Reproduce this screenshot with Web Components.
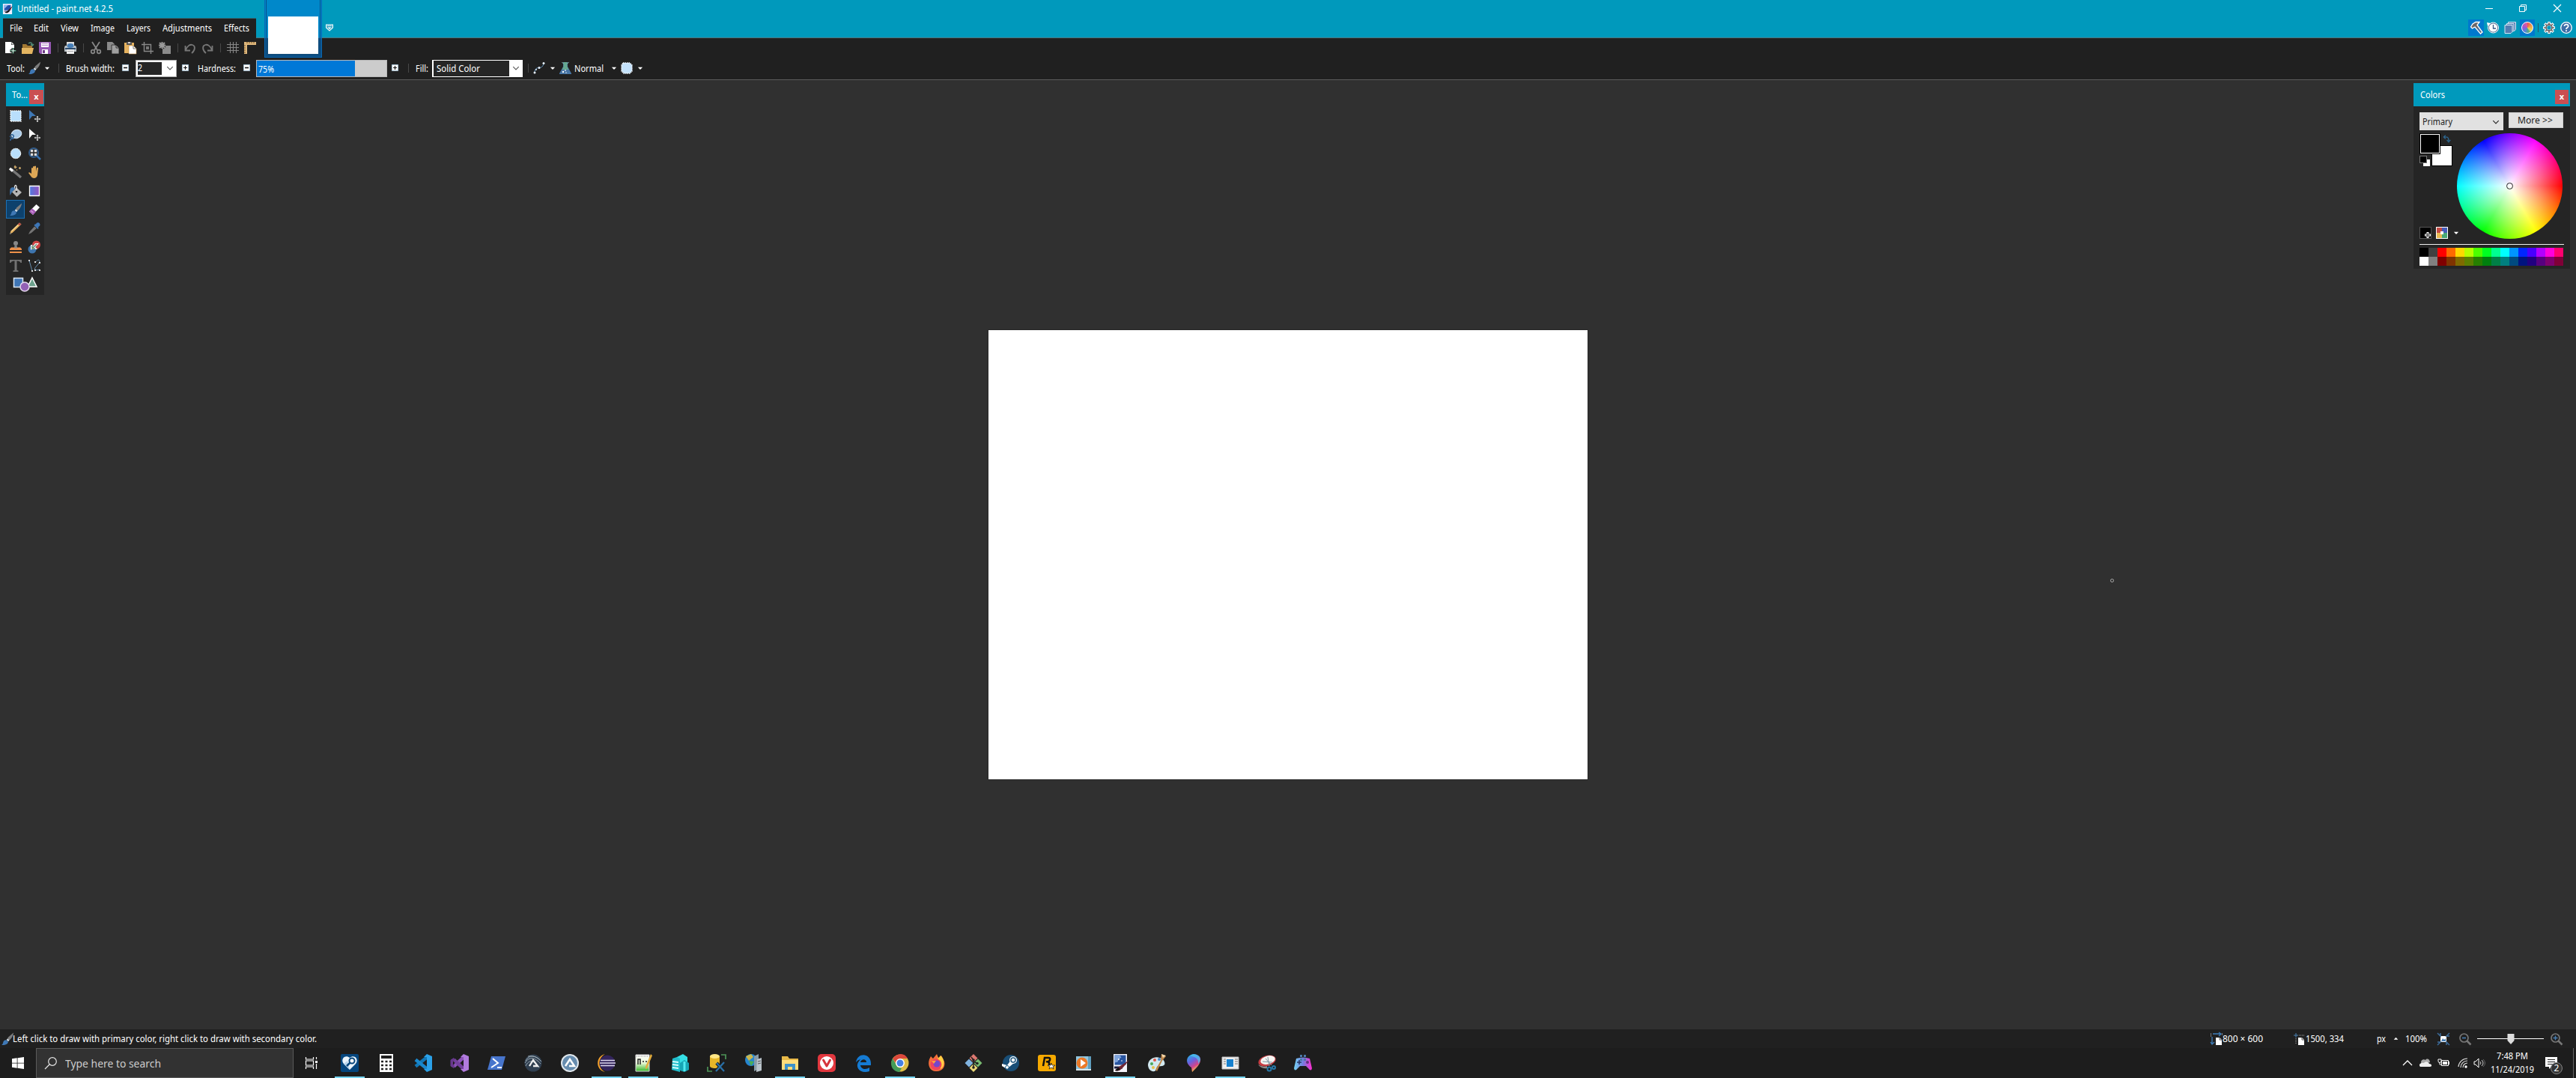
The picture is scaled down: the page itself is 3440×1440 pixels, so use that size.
<!DOCTYPE html>
<html lang="en"><head><meta charset="utf-8"><title>Untitled - paint.net 4.2.5</title>
<style>html,body{margin:0;height:100%;background:#303030;overflow:hidden}body{font:12px/16px "Noto Sans","Open Sans",sans-serif;color:#fff}</style></head>
<body><paint-desktop></paint-desktop>
<script>
const ICONS = {
 app:'<path d="M1 0h14v16H1z" fill="#eef"/><path d="M3 2h10v8H3z" fill="#2450a8"/><path d="M3 2h6L3 8z" fill="#8fb8ee"/><path d="M3 11h8v1H3z" fill="#224"/><path d="M4 13c3-1 4-2 6-4l6-6-5 8c-2 3-5 4-7 2z" fill="#111"/><path d="M11 9l5-6-4 7z" fill="#a22"/>',
 new:'<path d="M1 0h8l4 4v11H1z" fill="#fff"/><path d="M9 0v4h4z" fill="#202020"/><path d="M9.500 0l3.500 3.500H9.500z" fill="#ddd"/><path d="M11.500 8v8M7.500 12h8" stroke="#202020" stroke-width="4"/><path d="M11.500 8v7.500M7.800 11.800h7.500" stroke="#6cae91" stroke-width="1.600"/><path d="M11.500 9.500v4.500M9.500 11.800h4" stroke="#fff" stroke-width=".6"/>',
 open:'<path d="M1 3h5l2 2h6v4H1z" fill="#a47933"/><path d="M0 8h16l-2 8H0z" fill="#e4b561"/><path d="M9 2c3-2 5-1 5 2m-2-1l2.200 2L16 3" fill="none" stroke="#528c77" stroke-width="1.500"/>',
 save:'<path d="M0 0h16v16H2l-2-2z" fill="#9658b4"/><path d="M3 1h10v6H3zM4 10h8v6H4z" fill="#fff"/><path d="M4 2.500h8M4 4.700h8" stroke="#b68cc8"/><path d="M5 11h3v4H5z" fill="#6f3c8a"/>',
 print:'<path d="M3 0h10v6H3z" fill="#ddd"/><path d="M1 5h14l1 2v6H0V7z" fill="#b9c0c5"/><ellipse cx="8" cy="5" rx="4.500" ry="3" fill="#477fb8"/><path d="M1 8h14v2H1z" fill="#2e4b6c"/><path d="M3 10h10v6H3z" fill="#eee"/><path d="M4 12.500h8" stroke="#aaa"/>',
 cut:'<path d="M3 0l7 11M13 0L6 11" stroke="#888" stroke-width="1.800"/><g fill="none" stroke="#888" stroke-width="1.700"><circle cx="4" cy="13" r="2.300"/><circle cx="12" cy="13" r="2.300"/></g>',
 copy:'<path d="M0 0h7l3 3v8H0z" fill="#8b8b8b"/><path d="M6 4h6l4 4v8H6z" fill="#a0a0a0" stroke="#202020" stroke-width=".8"/><path d="M12 4v4h4" fill="none" stroke="#333"/>',
 paste:'<path d="M0 1h13v14H0z" fill="#e5b25f"/><path d="M3 0h7v4H3z" fill="#555"/><path d="M5 0h3v2H5z" fill="#ccc"/><path d="M6 5h6l4 4v7H6z" fill="#fff" stroke="#c08f48" stroke-width=".6"/><path d="M12 5v4h4" fill="none" stroke="#777"/>',
 crop:'<path d="M3.500 0v12.500H16M0 3.500h12.500V16" fill="none" stroke="#888" stroke-width="1.400"/><path d="M6 6h4v4H6z" fill="#777"/>',
 desel:'<path d="M5 5h11v11H5z" fill="#8b8b8b"/><path d="M1 1l7 7M8 1L1 8" stroke="#202020" stroke-width="4"/><path d="M1 1l7 7M8 1L1 8M4.500 0v9M0 4.500h9" stroke="#999" stroke-width="2"/>',
 undo:'<path d="M1.500 5v6.500H8M2 11C4 5 8 3 11 4c4 1 4 7-1 11" fill="none" stroke="#777" stroke-width="1.800"/>',
 redo:'<path d="M14.500 5v6.500H8M14 11C12 5 8 3 5 4c-4 1-4 7 1 11" fill="none" stroke="#777" stroke-width="1.800"/>',
 grid:'<path d="M4.500 0v15M8.500 0v15M12.500 0v15M0 3.500h16M0 7.500h16M0 11.500h16" stroke="#858585" stroke-width="1.100"/>',
 ruler:'<path d="M0 0h16v4H4v12H0z" fill="#deb77c"/><path d="M4 0v2m3-2v2m3-2v2m3-2v2M0 5h2M0 8h2m-2 3h2m-2 3h2" stroke="#765529"/>',
 brush:'<path d="M16-.5L9 5.500 7.500 8.500 9.500 10C13 8 15.500 4 16-.5z" fill="#7d7d7d"/><path d="M8 7.500l2.500 2L9 11.300 6.700 9z" fill="#d3dfe8"/><path d="M6.300 9.300l2.700 2.400C8.500 15.500 4 16 0 16c1.600-1 1.800-2 2.200-3.500.5-2.300 2-3.300 4.100-3.200z" fill="#3f78b5"/>',
 minus:'<path d="M3 3h10v10H3z" fill="#fff" stroke="#a9c7dc"/><path d="M5 8h6" stroke="#111" stroke-width="2"/>',
 plus:'<path d="M3 3h10v10H3z" fill="#fff" stroke="#a9c7dc"/><path d="M5 8h6M8 5v6" stroke="#111" stroke-width="1.500"/>',
 arrow:'<path d="M3 6h10l-5 5z" fill="#fff"/>', up:'<path d="M3 10h10L8 5z" fill="#fff"/>',
 chev:'<path d="M2 5l6 6 6-6" fill="none" stroke="currentColor" stroke-width="1.700"/>',
 curve:'<path d="M2 13C3 3 12 12 14 2" fill="none" stroke="#5f8eb5"/><g fill="#e8f3ff"><circle cx="2" cy="14" r="1.500"/><circle cx="8" cy="7.500" r="1.500"/><circle cx="14" cy="1.500" r="1.500"/><circle cx="4" cy="10" r="1"/></g>',
 flask:'<path d="M5 0h6v6l5 9v1H0v-1l5-9z" fill="#4775a5"/><path d="M5.500 0h5v6l2 4h-9l2-4z" fill="#65a88f"/><path d="M3.500 0l2 2m7-2l-2 2" stroke="#9cc"/><circle cx="5" cy="13" r="1.200" fill="#fff"/><circle cx="8" cy="11" r="1" fill="#cde"/><circle cx="9" cy="14" r=".7" fill="#fff"/>',
 blob:'<path d="M3 1h9l3 3v8l-3 3H4l-3-3V4z" fill="#c4e2fc" stroke="#f2f8ff" stroke-width="1.500" stroke-dasharray="1.500 1"/>',
 tabs:'<path d="M1 1.500h14v6.500l-7 6.500L1 8z" fill="#3aa6c4" stroke="#fff" stroke-width="1.800"/><path d="M4 4h2m1 0h2m1 0h2" stroke="#fff" stroke-width="1.500"/><path d="M4 7h8l-4 4z" fill="#fff"/>',
 min:'<path d="M3 8.500h10" stroke="#fff"/>', restore:'<path d="M3.500 5.500h7v7h-7zM5.500 5.500v-2h7v7h-2" fill="none" stroke="#fff"/>', close:'<path d="M3 3l10 10M13 3L3 13" stroke="#fff" stroke-width="1.200"/>',
 hammer:'<path d="M.5 7L3 3l4-2.500h5L9 4.500l7 9.500-2.500 2L6 7 2.500 9z" fill="#6d6768" stroke="#fff" stroke-width="1.300"/><path d="M9.500 8.500l4 5" stroke="#4675ae" stroke-width="1.500"/>',
 clock:'<circle cx="8.500" cy="8" r="7" fill="#547195" stroke="#fff"/><circle cx="8.500" cy="8" r="5.600" fill="#fff"/><path d="M8.500 4v5H12" fill="none" stroke="#355782" stroke-width="1.300"/><path d="M0 1l5 1-4 4z" fill="#fff"/>',
 layers:'<g fill="#547eb2" stroke="#d7e7f3"><path d="M5.500.5h10v10l-2 2h-8z"/><path d="M3.500 2.500h9.500v9l-2 2H3.500z"/><path d="M1 4.500h10v9L9 15.500H1z"/></g>',
 gear:'<path d="M8 0v3m0 10v3M0 8h3m10 0h3M2.300 2.300l2.200 2.200m7 7l2.200 2.200M13.700 2.300l-2.200 2.200m-7 7l-2.200 2.200" stroke="#fff" stroke-width="3.600"/><circle cx="8" cy="8" r="4.500" fill="none" stroke="#fff" stroke-width="3.600"/><path d="M8 1v3m0 8v3M1 8h3m8 0h3M3 3l2 2m6 6l2 2M13 3l-2 2m-6 6l-2 2" stroke="#716a6a" stroke-width="1.700"/><circle cx="8" cy="8" r="4" fill="none" stroke="#716a6a" stroke-width="1.800"/>',
 help:'<circle cx="8" cy="8" r="7.300" fill="#3d6ea8" stroke="#fff" stroke-width="1.300"/><path d="M5.500 6c0-3.500 5.500-3 5.200 0C10.500 8 8 7.500 8 10m0 1.300V13" fill="none" stroke="#fff" stroke-width="1.800"/>',
 select:'<path d="M1 1h14v14H1z" fill="#b9dffc" stroke="#fff" stroke-width="1.400" stroke-dasharray="1.500 1"/>',
 move:'<path d="M1 0l9 8H5l-4 5z" fill="#3f78b5"/><path d="M12 8v8M8 12h8" stroke="#ddd" stroke-width="1.200"/><path d="M12 8l1.500 1.500h-3zM12 16l1.500-1.500h-3zM8 12l1.500-1.500v3zM16 12l-1.500-1.500v3z" fill="#ddd"/>',
 moves:'<path d="M1 0l9 8H5l-4 5z" fill="#fff"/><path d="M12 8v8M8 12h8" stroke="#ddd" stroke-width="1.200"/><path d="M12 8l1.500 1.500h-3zM12 16l1.500-1.500h-3zM8 12l1.500-1.500v3zM16 12l-1.500-1.500v3z" fill="#ddd"/>',
 lasso:'<ellipse cx="9" cy="7" rx="7" ry="5.500" transform="rotate(-20 9 7)" fill="#a8cae8" stroke="#dcecf9"/><path d="M1 9c2-2 5-1 4 2S0 12 1 16m-1-6l5 4" fill="none" stroke="#37689a" stroke-width="1.600"/>',
 circ:'<circle cx="8" cy="8" r="6.700" fill="#b9dffc" stroke="#fff" stroke-dasharray="2 .5"/>',
 zoom:'<circle cx="7" cy="7" r="6" fill="#333" stroke="#345d8b" stroke-width="2"/><path d="M3 3h8v8H3z" fill="#ddd"/><path d="M7 3v8M3 7h8" stroke="#222" stroke-width="1.500"/><path d="M11 11l5 5" stroke="#3871ae" stroke-width="2.500"/>',
 wand:'<path d="M2 4l13 11" stroke="#777" stroke-width="3.400"/><path d="M0 3l4 3.500" stroke="#fff" stroke-width="3.400"/><g fill="#c4a267"><path d="M7-1.500L8.500.5 10 1 8.500 2.500 7 3.500 5.500 1z"/><circle cx="13.500" cy="2.500" r="1.500"/><circle cx="9.500" cy="5" r=".8"/></g>',
 hand:'<path d="M4 8V3q0-1 1-1t1 1v4V1q0-1 1-1t1 1v6V0q1-1 2 0v7l1-5q2-1 2 1l-1 9c-1 5-7 5-9 1L0 9q1-2 4 1z" fill="#dda756"/>',
 bucket:'<path d="M9 3.500l7 6.500-6.500 6L3 9.500z" fill="#b5b5b5"/><path d="M9 9V2Q8-1 6.500 2v4" fill="none" stroke="#e5e5e5" stroke-width="1.300"/><path d="M6 3.500C1 2.500-.5 5 .5 14L3 9.500l4-4z" fill="#3f75ae"/><circle cx="9" cy="9" r="1.300" fill="#222"/>',
 grad:'<defs><linearGradient id="g"><stop stop-color="#507ade"/><stop offset="1" stop-color="#9655c1"/></linearGradient></defs><path d="M1.500 1.500h13v13h-13z" fill="url(#g)" stroke="#fff" stroke-width="1.300"/>',
 erase:'<path d="M10.500 1l4.500 4-9 10-5-4.500z" fill="#fff"/><path d="M5 6.500l5 4-4 4.500-5-4.500z" fill="#a557b6"/><path d="M3.500 9.500l3 2.500" stroke="#d9a5e2" stroke-width="1.300"/>',
 pencil:'<path d="M13 .5l2.500 2L4 13.500 0 16l1.500-4.500z" fill="#e8b361"/><path d="M13 .5l2.500 2-2 2-2.700-2z" fill="#b95149"/><path d="M2.500 11.500L11 3.500" stroke="#fff0b8" stroke-width=".9"/><path d="M.8 13.500l1.500 1.500L0 16z" fill="#777"/>',
 dropper:'<path d="M9.500 2.500l2-2q4-1 4 3.500l-2.500 2.500.5 1.500-1 1L7.500 4l1-1.500z" fill="#3e77b7"/><path d="M8 5.500L10.800 8 4 14l-4 2 2-4z" fill="#757575"/>',
 stamp:'<circle cx="8" cy="3" r="3" fill="#888"/><path d="M6.500 5h3v4h-3z" fill="#808080"/><path d="M2 8.500h12l2 2V12H0v-1.500zM0 14h16v2H0z" fill="#ef914a"/><path d="M6 8.500h4" stroke="#888" stroke-width="2"/>',
 recolor:'<circle cx="10.500" cy="5" r="5.500" fill="#c44"/><circle cx="5" cy="11" r="5.500" fill="#3e75ae"/><path d="M3 12V5h2l1 2 3-4h5L9 8l3 3H4z" fill="#fff"/><path d="M5 6v4h4M6 9l5-5" stroke="#668d71" stroke-width="1.500" fill="none"/>',
 text:'<path d="M0 0h16v4h-1.500Q14 1.500 9.500 1.500V14l2 .5V16H4.500v-1.500l2-.5V1.500Q2 1.500 1.500 4H0z" fill="#727272"/>',
 lines:'<path d="M1 1l4 14M9 4C13-3 18 1 12 7s-4 8 3 6" fill="none" stroke="#668fb1"/><g fill="#fff"><circle cx="1" cy="1" r="1.100"/><circle cx="5" cy="15" r="1.100"/><circle cx="9" cy="3" r="1.100"/><circle cx="15" cy="4" r="1.100"/><circle cx="9" cy="14" r="1.100"/><circle cx="15" cy="14" r="1.100"/></g>',
 swap:'<path d="M3 4.500h4.500q4 0 4 7M5.500 1L2 4.500l3.500 3.500m2.500 2l3.500 4 3.500-4" fill="none" stroke="#2d668f" stroke-width="2"/>',
 sizei:'<path d="M3 1h11M11-1l3 2-3 3M2 5v10M0 12l2 3 3-3" fill="none" stroke="#3c7cb9" stroke-width="1.300"/><path d="M.5 0v5M15.500 0v3" stroke="#777"/><path d="M7 6h5l3 3v7H7z" fill="#fff"/><path d="M12 6v3h3" stroke="#555" fill="none"/>',
 posi:'<path d="M3 0v6M0 3h6" stroke="#4b82b4"/><path d="M7 3h8M3 7v8" stroke="#aaa" stroke-dasharray="1 1"/><path d="M6 6h5l3 3v7H6z" fill="#fff"/><path d="M11 6v3h3" stroke="#555" fill="none"/>',
 fit:'<path d="M4 4h8v8H4z" fill="#fff"/><path d="M5 11l2-4 2 2 2-2v4z" fill="#477eb4"/><path d="M0 0l4 4V0M16 0l-4 4h4M0 16l4-4H0m16 4l-4-4v4" fill="none" stroke="#3c6d9d" stroke-width="1.400"/>',
 zout:'<circle cx="6.500" cy="6.500" r="5.500" fill="none" stroke="#777" stroke-width="1.700"/><path d="M4 6.500h5" stroke="#477fb5" stroke-width="1.600"/><path d="M10.500 10.500l5 5" stroke="#777" stroke-width="2.500"/>',
 zin:'<circle cx="6.500" cy="6.500" r="5.500" fill="none" stroke="#777" stroke-width="1.700"/><path d="M3.500 6.500h6M6.500 3.500v6" stroke="#477fb5" stroke-width="1.400"/><path d="M10.500 10.500l5 5" stroke="#777" stroke-width="2.500"/>',
 win:'<path d="M0 2.300L6.700 1.300v6.400H0zM7.500 1.200L16 0v7.700H7.500zM0 8.400h6.700v6.400L0 13.800zM7.500 8.400H16V16l-8.500-1.200z" fill="#fff"/>',
 search:'<circle cx="10" cy="6" r="5.300" fill="none" stroke="#e5e5e5" stroke-width="1.200"/><path d="M6 10l-6 6" stroke="#e5e5e5" stroke-width="1.200"/>',
 task:'<path d="M.5 0v3h10V0M.5 16v-3h10v3M.5 5h10v6H.5zM14.500 0v3m0 6v7" fill="none" stroke="#fff" stroke-width="1.200"/><path d="M13 5h3v3h-3z" fill="#fff"/>',
 caret:'<path d="M2 11l6-6 6 6" fill="none" stroke="#fff" stroke-width="1.300"/>',
 cloud:'<path d="M3 10C0 5 5 2 8 4c2-3 6-1 6 3z" fill="#aaa"/><path d="M1 13c-3-3 1-6 5-5 1-2 5-3 7 1 4 0 4 4 1 4z" fill="#eee"/>',
 battery:'<path d="M5.500 4.500h9v7h-9zM15.500 6v4" fill="none" stroke="#fff"/><path d="M7 6h6v4H7z" fill="#fff"/><path d="M1 3v2.500q0 2 2 2t2-2V3M2 2v2m2-2v2M3 7v3h2" stroke="#fff" fill="none"/>',
 wifi:'<g fill="none" stroke="#ddd" stroke-width="1.200"><path d="M2 13A12 12 0 0 1 14 2M5 14A9 9 0 0 1 14 5M8 14A6 6 0 0 1 14 8"/></g><circle cx="12" cy="13" r="1.700" fill="#fff"/>',
 volume:'<path d="M1 6h2l4-4v12l-4-4H1z" fill="none" stroke="#fff"/><path d="M9 6q2 2 0 4m2-6q4 4 0 8" stroke="#ccc" fill="none"/><path d="M13 3q5 5 0 10" stroke="#666" fill="none"/>',
 note:'<path d="M0 0h16v13H8l-3 3v-3H0z" fill="#fff"/><path d="M3 3.500h10M3 6.500h10M3 9.500h7" stroke="#222"/>',
 shapes:'<path d="M1.500 1.500h12v12h-12z" fill="#3e75b5" stroke="#dce8f4" stroke-width="1.500"/><path d="M26 1l6 12H20z" fill="#6ca18c" stroke="#fff" stroke-width="1.500"/><circle cx="16" cy="13" r="6" fill="#9361b5" stroke="#e5d9ee" stroke-width="1.500"/>',
 heart:'<rect width="24" height="24" rx="2" fill="#05467e"/><path d="M12 21L4 13C-1 7 6 0 12 5c6-5 13 2 8 8z" fill="#eaf4fc"/><path d="M12 21l-8-8 5-4z" fill="#b9d5ec"/><circle cx="15" cy="9" r="3.500" fill="#fff" stroke="#07477d" stroke-width="2"/><path d="M12.500 11.500L8 16" stroke="#07477d" stroke-width="2.500"/>',
 calc:'<path d="M3 0h18v24H3z" fill="#fff"/><path d="M5 2h14v4H5z" fill="#202020"/><path d="M5 10h14M5 15h14M5 20h14" stroke="#202020" stroke-width="2.500" stroke-dasharray="3 2.500"/>',
 code:'<path d="M17.500 4L2 16.500" stroke="#1176b5" stroke-width="4.500"/><path d="M17.500 20L2 7.500" stroke="#1a88cc" stroke-width="4.500"/><path d="M17 0l7 3v18l-7 3-4-4h4V4h-4z" fill="#2ba1e8"/>',
 vs:'<path d="M17.500 4L4 16.500" stroke="#8b53b8" stroke-width="4.500"/><path d="M17.500 20L4 7.500" stroke="#74419e" stroke-width="4.500"/><path d="M1 7.500v9M0 8l4-2.500v13L0 16z" fill="#68388e" stroke="#68388e"/><path d="M3 9.500v5l2.500-2.500z" fill="#1d1d1d"/><path d="M17 0l7 3v18l-7 3-4-4h4V4h-4z" fill="#b17bdd"/>',
 ps:'<path d="M5 3h19l-5 18H0z" fill="#4775cc"/><path d="M7 6l7 6-9 6M13 18h6" fill="none" stroke="#fff" stroke-width="2"/>',
 ai:'<circle cx="12" cy="12" r="11.500" fill="#303f50"/><g fill="none" stroke="#a5b2ba" stroke-width=".9"><path d="M2 9C8-2 18 4 23 10M1 12C7 2 15 5 22 13M2 16C6 7 13 8 20 18M5 3C14 2 18 5 22 9"/></g><path d="M7 16l5-8 6 8h-6" fill="none" stroke="#eee" stroke-width="2.300"/>',
 ai2:'<circle cx="12" cy="12" r="12" fill="#e0e6eb"/><circle cx="12" cy="12" r="10" fill="#668cae"/><path d="M6 16l6-9 6 9h-7" fill="none" stroke="#fff" stroke-width="2.500"/>',
 eclipse:'<path d="M10 0C-3 3-3 21 10 24-1 18 1 5 10 0z" fill="#f5a22c"/><circle cx="13" cy="12" r="10.500" fill="#32245b"/><path d="M4 8.500h19M3 12h21M4 15.500h19" stroke="#ddd6ed" stroke-width="1.700"/>',
 npp:'<defs><linearGradient id="n" x2="0" y2="1"><stop stop-color="#fff"/><stop offset=".5" stop-color="#e9f8d6"/><stop offset="1" stop-color="#35b629"/></linearGradient></defs><path d="M2 1h18v22H2z" fill="url(#n)" stroke="#ddd"/><path d="M3 3h16" stroke="#888" stroke-dasharray="1 1"/><path d="M5 14V7h3v7M11 10h2m2 0h2" stroke="#222" stroke-width="1.500" fill="none"/><path d="M22 0l2 2-7 17-2 1v-3z" fill="#e4ad3c"/>',
 azure:'<path d="M8 4l8-4 6 4v7l-6 3H8z" fill="#35dfe5"/><path d="M2 6l6-2 4 2v18l-11-3z" fill="#22bdcb"/><path d="M12 12l6-4 6 4v9l-6 3-6-2z" fill="#17a6b5"/><path d="M2 10l8 1M2 14l8 1M2 18l8 1" stroke="#d5ffff" stroke-width="2"/><path d="M18 10v13" stroke="#51eaf0" stroke-width="3"/>',
 sql:'<path d="M3 3v13c0 4 13 4 13 0V3" fill="#e5b629"/><ellipse cx="9.500" cy="3" rx="6.500" ry="3" fill="#ffe786"/><path d="M18 1h6v6M0 17v6h6" fill="none" stroke="#4d9457" stroke-width="1.700"/><path d="M12 12l10 11M22 11L11 23" stroke="#1d1d1d" stroke-width="4.500"/><path d="M12 12l10 11M22 11L11 23" stroke="#296fa7" stroke-width="2.300"/>',
 iis:'<circle cx="9" cy="8" r="8" fill="#2786cf"/><path d="M2 3l7-3 3 4-6 5z" fill="#c9b74d"/><path d="M6 9l7 1-4 6z" fill="#4aae57"/><path d="M13 3l6-3v20l-6 3z" fill="#889ba7"/><path d="M17 7l6-2v17l-7 2z" fill="#bac4cb"/><path d="M18 10l4-1m-4 4l4-1" stroke="#555"/>',
 explorer:'<path d="M1 3h8l2 3h12v15H1z" fill="#e8b948"/><path d="M1 8h22v13H1z" fill="#ffdd7c"/><path d="M5 13h14v8h-4v-4H9v4H5z" fill="#3d92ca"/>',
 vivaldi:'<rect width="24" height="24" rx="5" fill="#e2373e"/><circle cx="12" cy="12" r="9" fill="#fff"/><path d="M7.500 8l4.500 8 4.500-8" fill="none" stroke="#d6343b" stroke-width="3" stroke-linecap="round" stroke-linejoin="round"/>',
 edge:'<path d="M2 11C4-2 21-2 22 12v3H8c1 6 8 6 12 3v5C8 27 1 18 5 11l3-4q-4 1-6 4m6 0h8c0-5-7-5-8 0z" fill="#157bd3"/>',
 chrome:'<circle cx="12" cy="12" r="11.500" fill="#ddbd47"/><path d="M2 6Q7 0 13 0t9 6H12L8 14z" fill="#dc483c"/><path d="M2 6l7 12 5 1-3 5C0 23-2 12 2 6z" fill="#449b59"/><circle cx="12" cy="12" r="6" fill="#fff"/><circle cx="12" cy="12" r="4.500" fill="#4481e4"/>',
 firefox:'<path d="M2 7l2-4 3 3 5-6 2 5 4-3 4 8c2 7-3 13-10 13C4 24-1 16 2 7z" fill="#f46c3b"/><path d="M12 1l2 5 3-4c6 5 6 15 0 18z" fill="#ffcf43"/><circle cx="11" cy="14" r="7.500" fill="#f0445d"/><circle cx="12" cy="13" r="4.500" fill="#7547ca"/><path d="M5 9h6l-3 4z" fill="#ff9e3b"/>',
 git:'<path d="M12 0l5.500 5.500L12 11 6.500 5.500z" fill="#dc7870"/><path d="M6 6.500l5.500 5.500L6 17.500.5 12z" fill="#80b3df"/><path d="M18 6.500l5.500 5.500-5.500 5.500-5.500-5.500z" fill="#79bb71"/><path d="M12 13l5.500 5.500L12 24l-5.500-5.500z" fill="#ecd877"/><path d="M9 4l3 4v10m0-8l6 3" stroke="#222" stroke-width="1.500" fill="none"/><g fill="#222"><circle cx="12" cy="8" r="1.800"/><circle cx="17" cy="12.500" r="1.800"/><circle cx="12" cy="18" r="1.800"/></g>',
 steam:'<circle cx="13" cy="12" r="11" fill="#194e76"/><path d="M1 13l7 2 5-7 4 4-6 5-3 3-7-4z" fill="#fff"/><circle cx="16" cy="8" r="5" fill="#fff"/><circle cx="16" cy="8" r="3" fill="none" stroke="#235a80" stroke-width="1.500"/><circle cx="8" cy="18" r="2.500" fill="none" stroke="#235a80"/>',
 rock:'<rect y="1" width="24" height="22" rx="3" fill="#f6a900"/><path d="M7 16L9 5h5q3 0 2 3t-5 2m2 0q3 1 2 5" fill="none" stroke="#111" stroke-width="2.500"/><path d="M18 12l1 3h4l-3 2 1 3-3-2-3 2 1-3-3-2h4z" fill="#fff" stroke="#111" stroke-width=".7"/>',
 media:'<path d="M2 3h20v18H2z" fill="#91c6df"/><path d="M18 3h4v18h-4z" fill="#5e9ebe"/><path d="M2 20h20v2H2z" fill="#d9e6eb"/><circle cx="10" cy="12" r="7.500" fill="#eb7928"/><path d="M8 7l7 5-7 5z" fill="#fff"/>',
 pdn:'<path d="M3 0h18v24H3z" fill="#f3f3fa"/><path d="M4.500 1.500h15v13h-15z" fill="#2854a0"/><path d="M4.500 1.500h7l2 3-3 2-2 4-4 1z" fill="#7ea4dc"/><circle cx="10" cy="7" r="1" fill="#fff"/><circle cx="14" cy="9" r=".8" fill="#fff"/><path d="M4 16.500h11v3H4z" fill="#151b3c"/><path d="M5 22c7 2 9-2 19-14-9 6-16 10-19 14z" fill="#702532"/><path d="M5 22c3 1 5 0 7-2l-2-2c-2 1-3 2-5 4z" fill="#111"/>',
 paint:'<path d="M0 14C1 5 12 1 20 7c6 8 0 10-6 9-3 0-2 5-5 7-6 1-9-4-9-9z" fill="#d2e9f0"/><circle cx="5" cy="13" r="2" fill="#4aa85b"/><circle cx="9" cy="8" r="2" fill="#df5648"/><circle cx="15" cy="7" r="2" fill="#4c8bc8"/><circle cx="7" cy="18" r="2" fill="#e9c34c"/><path d="M18 0l6 3-5 6-7 14-2-2 7-12z" fill="#bd864b"/><path d="M18 0l6 2-4 3z" fill="#f2d7ab"/>',
 p3d:'<defs><linearGradient id="p" x2=".5" y2="1"><stop stop-color="#17c5e6"/><stop offset=".45" stop-color="#6961e1"/><stop offset=".75" stop-color="#d2438c"/><stop offset="1" stop-color="#ffd247"/></linearGradient></defs><path d="M12 0c12 1 11 11 4 18l-6 6-1-6C-1 11 3 1 12 0z" fill="url(#p)"/><path d="M12 0c10 1 11 9 6 13C19 5 13 4 7 2z" fill="#48c9ec" opacity=".7"/>',
 news:'<path d="M1 4h22v16H1z" fill="#eee" stroke="#bbb"/><path d="M7 7h9v10H7z" fill="#1781cf"/><path d="M3 7h3M3 10h3m-3 3h3m12-6h4m-4 3h4m-4 3h4" stroke="#777"/>',
 snip:'<ellipse cx="12" cy="9" rx="12" ry="7" transform="rotate(-15 12 9)" fill="#c63d43"/><ellipse cx="13" cy="8" rx="10" ry="5.500" transform="rotate(-15 13 8)" fill="#f5f5f3"/><path d="M6 10l13 1M13 4l2 12M10 6l8 9" stroke="#8199a4"/><path d="M0 14q6 4 12 2v3q-8 1-12-5" fill="#8f8a89"/><g stroke="#2779a9" stroke-width="2" fill="none"><circle cx="15" cy="20" r="2.500"/><circle cx="21" cy="18" r="2"/></g>',
 pad:'<defs><linearGradient id="q"><stop stop-color="#76d5f4"/><stop offset=".5" stop-color="#727de0"/><stop offset="1" stop-color="#ff2cd0"/></linearGradient></defs><path d="M3 6q9-3 18 0l3 13q-1 5-5 0l-3-3H8l-3 3q-4 5-5 0z" fill="url(#q)"/><path d="M8 1h3v3H8zm5 0h3v3h-3zm-5 5h3v3H8zm5 0h3v3h-3z" fill="#4b79a8"/><path d="M4 11h6M7 8v6" stroke="#263563" stroke-width="1.500"/><circle cx="18" cy="11" r="2" fill="#5d347b"/>'
};
/* Vector icon, sized through its s attribute; vb gives a custom viewBox. */
customElements.define('pd-icon', class extends HTMLElement{
 connectedCallback(){const s=this.getAttribute('s')||16,w=this.getAttribute('w')||s,vb=this.getAttribute('vb')||'0 0 16 16';
 this.attachShadow({mode:'open'}).innerHTML=`<style>:host{display:block;flex:none;width:${w}px;height:${s}px}svg{display:block;overflow:visible}</style><svg width="${w}" height="${s}" viewBox="${vb}">${ICONS[this.getAttribute('name')]}</svg>`}});
/* Single-line label condensed to the width given in its w attribute. */
customElements.define('fit-text', class extends HTMLElement{
 connectedCallback(){const r=this.attachShadow({mode:'open'}),w=+this.getAttribute('w');
 r.innerHTML=`<style>:host{display:block;flex:none;width:${w}px;white-space:nowrap}span{display:inline-block;transform-origin:0 50%}</style><span><slot></slot></span>`;
 const s=r.querySelector('span');const n=s.getBoundingClientRect().width;if(n)s.style.transform=`scaleX(${w/n})`}});
const I=(n,s=16,x='')=>`<pd-icon name="${n}" s="${s}" ${x}></pd-icon>`, T=(t,w)=>`<fit-text w="${w}">${t}</fit-text>`;
/* Builds flex items from [start, width, content, drop]; gaps become leading margins. */
const flow=(items,start=0)=>{let p=start;return items.map(([x,w,h,y=0])=>{const m=x-p;p=x+w;return `<div class="i" style="margin-left:${m}px;width:${w}px;${y?`margin-top:${y*2}px`:''}">${h}</div>`}).join('')};
const BASE=`*{box-sizing:border-box}.row{display:flex;align-items:center}.i{flex:none;display:flex;align-items:center}.sep{width:1px;height:12px;background:#484848}`;
const def=(n,css,html)=>customElements.define(n,class extends HTMLElement{connectedCallback(){this.attachShadow({mode:'open'}).innerHTML=`<style>${BASE}${css}</style>${html}`}});
const SEP='<div class="sep"></div>';
def('title-area',`:host{display:block;height:51px;background:#0099bc;border-bottom:1px solid #4d7680;position:relative;flex:none}
.t{height:24px}.m{height:27px;width:338px;background:#202020;border-top:1px solid #32626c}.b{display:flex;margin-left:4px}
.x{height:25px}.hl{height:22px;background:#0078ce;justify-content:center}
.tab{position:absolute;left:353px;top:0;width:77px;height:77px;background:rgba(0,120,215,.5);border:1px solid #0768b5;border-top:0;padding:22px 4px 4px}.tab div{height:50px;background:#fff}.tab:after{content:"";position:absolute;inset:0 1px 1px;border:1px solid #07508b;border-top:0}`,
`<div class="row t">${flow([[3,13,I('app',14)],[23,128,T('Untitled - paint.net 4.2.5',128)],[3316,16,I('min'),-1],[3361,16,I('restore'),-1],[3407,16,I('close'),-1]])}</div>
<div class="b"><div class="row m">${flow([['File',13,17],['Edit',45,20],['View',81,24],['Image',121,32],['Layers',169,32],['Adjustments',217,66],['Effects',299,34]].map(a=>[a[1],a[2],T(a[0],a[2])]),4)}</div>
<div class="row x">${flow([[435,9,I('tabs',10)],[3296,21,`<div class="i hl" style="width:21px">${I('hammer')}</div>`],[3321,16,I('clock')],[3344,16,I('layers')],[3365,20,`<div class="i hl" style="width:20px"><div style="width:16px;height:16px;border-radius:50%;border:1.500px solid #fff;background:conic-gradient(#e65258,#f5a145 20%,#e6d75d 35%,#51a784 45%,#5387d8 58%,#9a54da 75%,#e65a97)"></div></div>`],[3389,1,'<div class="sep" style="background:#245a69"></div>'],[3396,16,I('gear')],[3419,16,I('help')]],342)}</div></div><div class="tab"><div></div></div>`);
def('tool-strip',`:host{display:block;height:56px;background:#202020;border-bottom:1px solid #5c5c5c;box-shadow:0 1px #444;flex:none}
.a{height:26px}.b{height:28px}.b fit-text{padding-top:1px}.c{height:23px;width:55px;background:#fff;border:1px solid #aaa;display:flex;align-items:center;color:#555}.c b{font-weight:400;display:block;margin-left:2px;width:32px;height:17px;background:#262626;color:#fff;margin-right:6px}.c b fit-text{padding-top:0}
.f{width:121px;border-color:#fff}.f b{width:101px;height:21px;margin-left:1px;padding:3px 4px;margin-right:4px}.s{width:175px;height:23px;border:1px solid #b8b8b8;background:linear-gradient(90deg,#0078d7 131px,#ccc 131px);padding:3px 2px}`,
`<div class="row a">${flow([[6,16,I('new')],[29,16,I('open')],[52,16,I('save')],[77,1,SEP],[86,16,I('print')],[111,1,SEP],[120,16,I('cut')],[143,16,I('copy')],[166,16,I('paste')],[189,16,I('crop')],[212,16,I('desel')],[237,1,SEP],[246,16,I('undo')],[269,16,I('redo')],[294,1,SEP],[303,16,I('grid')],[326,16,I('ruler')]])}</div>
<div class="row b">${flow([[9,24,T('Tool:',24)],[38,16,I('brush')],[58,10,I('arrow',10)],[78,1,SEP],[88,65,T('Brush width:',65)],[161,13,I('minus',13),-.5],[181,55,`<div class="c"><b>${T('2',6)}</b>${I('chev',10)}</div>`],[241,13,I('plus',13),-.5],[264,51,T('Hardness:',51)],[323,13,I('minus',13),-.5],[342,175,`<div class="s">${T('75%',21)}</div>`],[521,13,I('plus',13),-.5],[545,1,SEP],[555,17,T('Fill:',17)],[577,121,`<div class="c f"><b>${T('Solid Color',58)}</b>${I('chev',10)}</div>`],[705,1,SEP],[712,16,I('curve')],[733,10,I('arrow',10)],[747,16,I('flask')],[767,39,T('Normal',39)],[815,10,I('arrow',10)],[829,16,I('blob')],[850,10,I('arrow',10)]])}</div>`);
const WIN=`:host{display:block;background:#252525}.h{height:31px;background:#0099bc;padding-top:1px}.cl{width:19px;height:19px;background:#ca4f52;justify-content:center;font:bold 11px/17px "Noto Sans",sans-serif;margin-top:4px;align-items:flex-start}`;
const tool=(n)=>`<div class="c${n=='brush'?' on':''}">${I(n)}</div>`;
def('tools-window',WIN+`:host{width:51px;height:283px}.g{display:grid;grid-template-columns:25px 25px;grid-auto-rows:25px}.c{display:flex;align-items:center;justify-content:center}.on{background:#0d416d;border:1px solid #1b71b7}.z{grid-column:1/3;display:flex;align-items:center;justify-content:center}`,
`<div class="row h">${flow([[8,21,T('To...',21)],[31,19,'<div class="i cl">x</div>']])}</div><div class="g">${['select','move','lasso','moves','circ','zoom','wand','hand','bucket','grad','brush','erase','pencil','dropper','stamp','recolor','text','lines'].map(tool).join('')}<div class="z">${I('shapes',20,'w="33" vb="0 0 33 20"')}</div></div>`);
const P1='000 404040 f00 ff6a00 ffd800 b6ff00 4cff00 00ff21 00ff90 0ff 0094ff 0026ff 4800ff b200ff ff00dc ff006e fff 808080 7f0000 7f3300 7f6a00 5b7f00 267f00 007f0e 007f46 007f7f 004a7f 00137f 21007f 57007f 7f006e 7f0037'.split(' ');
def('colors-window',WIN+`:host{width:209px;height:248px}.top{display:flex;margin:8px 8px 0;gap:7px;color:#222}.sel{width:112px;height:24px;background:#e1e1e1;display:flex;align-items:center;padding:2px 0 0 4px}.btn{width:73px;height:21px;background:#e1e1e1;border:1px solid #d0d0d0;padding:2px 11px 0}
.mid{display:flex;margin:4px 8px 0;height:141px;gap:22px}.l{width:28px;display:flex;flex-direction:column;justify-content:space-between}.sw{width:44px;height:44px;display:grid}.s{width:28px;height:28px;border:1px solid #000;grid-area:1/1}.s.p{background:#000;box-shadow:inset 0 0 0 1px #fff}.s.q{background:#fff;margin:16px 0 0 16px}.dm{grid-area:1/1;margin:30px 0 0;width:14px;height:14px;background:linear-gradient(#fff,#fff) 5px 5px/9px 9px no-repeat}.dk{width:10px;height:10px;border:1px solid #777;background:#000}.swp{grid-area:1/1;margin:2px 0 0 31px}
.w{width:141px;height:141px;border-radius:50%;background:radial-gradient(circle closest-side,#fff,transparent),conic-gradient(from 90deg,red,yellow,lime,cyan,blue,magenta,red);display:flex;align-items:center;justify-content:center}.w i{width:9px;height:9px;border:1.500px solid #222;border-radius:50%}.bt{display:flex;align-items:center;gap:6px}.add{width:16px;height:16px;background:#000;border:1px solid #555;flex:none;padding:5px 0 0 5px}.pic{width:16px;height:16px;border:1.500px solid #fff;flex:none;background:linear-gradient(#fff,#fff) center/4px 4px no-repeat,conic-gradient(#475dba 25%,#49a877 0 50%,#e8b952 0 75%,#c34b45 0)}
.ln{height:1px;background:#eee;margin:7px 8px 4px}.pal{margin:0 9px 0 8px;display:grid;grid-template-columns:repeat(16,12px);grid-auto-rows:12px}`,
`<div class="row h">${flow([[9,33,T('Colors',33)],[189,18,'<div class="i cl" style="width:18px">x</div>']])}</div><div class="top"><div class="sel">${T('Primary',40)}<div style="margin-left:53px">${I('chev',10)}</div></div><div class="btn">${T('More &gt;&gt;',47)}</div></div>
<div class="mid"><div class="l"><div class="sw"><div class="s q"></div><div class="s p"></div><div class="dm"><div class="dk"></div></div><div class="swp">${I('swap',11)}</div></div><div class="bt"><div class="add"><svg style="display:block" width="10" height="10"><path d="M5 1v8M1 5h8" stroke="#fff" stroke-width="3"/><path d="M5 2v6M2 5h6" stroke="#222"/></svg></div><div class="pic"></div>${I('arrow',10)}</div></div><div class="w"><i></i></div></div><div class="ln"></div><div class="pal">${P1.map(c=>`<div style="background:#${c}"></div>`).join('')}</div>`);
def('paint-canvas',`:host{display:block;width:800px;height:600px;background:#fff;box-shadow:0 0 0 1px #292929}`,'');
def('status-bar',`:host{display:block;height:25px;background:#202020;flex:none}.row{height:25px}.sl{height:16px;width:89px;display:grid;align-items:center}.sl i{grid-area:1/1;height:1px;background:#fff}.sl svg{grid-area:1/1;margin-left:40px}`,
`<div class="row">${flow([[2,15,I('brush')],[17,406,T('Left click to draw with primary color, right click to draw with secondary color.',406)],[2952,16,I('sizei')],[2968,54,T('800 × 600',54)],[3063,16,I('posi')],[3079,51,T('1500, 334',51)],[3174,12,T('px',12),.5],[3195,9,I('up',9)],[3212,29,T('100%',29),.5],[3255,16,I('fit')],[3284,16,I('zout')],[3308,89,'<div class="sl"><i></i><svg width="10" height="16"><path d="M.5 1h9v9L5 15 .5 10z" fill="#ddd"/></svg></div>'],[3406,16,I('zin')]])}</div>`);
const apps='heart calc code vs ps ai ai2 eclipse npp azure sql iis explorer vivaldi edge chrome firefox git steam rock media pdn paint p3d news snip pad'.split(' '), on=['heart','eclipse','npp','explorer','chrome','pdn','news'];
def('task-bar',`:host{display:block;height:40px;background:#1d1d1d;flex:none}.row{height:40px}.s{width:344px;height:40px;background:#323232;border:1px solid #5a5a5a;display:flex;align-items:center;padding-left:11px;gap:11px;font-size:15px;color:#ccc}.ap{width:40px;height:40px;display:flex;align-items:center;justify-content:center;border-bottom:2px solid transparent;padding-top:2px}.on{border-color:#76d5f5}.tm{display:flex;flex-direction:column;gap:2px;align-items:center}.n{position:relative}.n b{position:absolute;left:7px;top:7px;width:16px;height:16px;border-radius:50%;background:#333;border:1px solid #888;font:12px/14px "Noto Sans",sans-serif;text-align:center}`,
`<div class="row">${flow([[16,16,I('win')],[48,344,`<div class="s">${I('search')}${T('Type here to search',128)}</div>`],[408,16,I('task')],...apps.map((a,k)=>[Math.round(447+k*48.98),40,`<div class="ap${on.includes(a)?' on':''}">${I(a,24,'vb="0 0 24 24"')}</div>`]),[3207,16,I('caret')],[3231,16,I('cloud')],[3255,16,I('battery')],[3281,16,I('wifi')],[3303,16,I('volume')],[3326,58,`<div class="tm">${T('7:48 PM',42)}${T('11/24/2019',58)}</div>`],[3399,24,`<div class="n">${I('note')}<b>2</b></div>`],[3436,1,'<div style="width:1px;height:40px;background:#666"></div>']])}</div>`);
/* Desktop: application chrome with two floating palettes over the workspace. */
def('paint-desktop',`:host{display:flex;flex-direction:column;width:3440px;height:1440px;background:#303030;position:relative}.ws{flex:1;display:flex;justify-content:center;padding-top:334px;background:#303030}tools-window,colors-window{position:absolute;top:111px}tools-window{left:8px}colors-window{left:3223px}.cur{position:absolute;left:2818px;top:773px;width:5px;height:5px;border:1px solid #aaa;border-radius:50%}title-area{z-index:1}`,
`<title-area></title-area><tool-strip></tool-strip><div class="ws"><paint-canvas></paint-canvas></div><status-bar></status-bar><task-bar></task-bar><tools-window></tools-window><colors-window></colors-window><div class="cur"></div>`);
</script></body></html>
